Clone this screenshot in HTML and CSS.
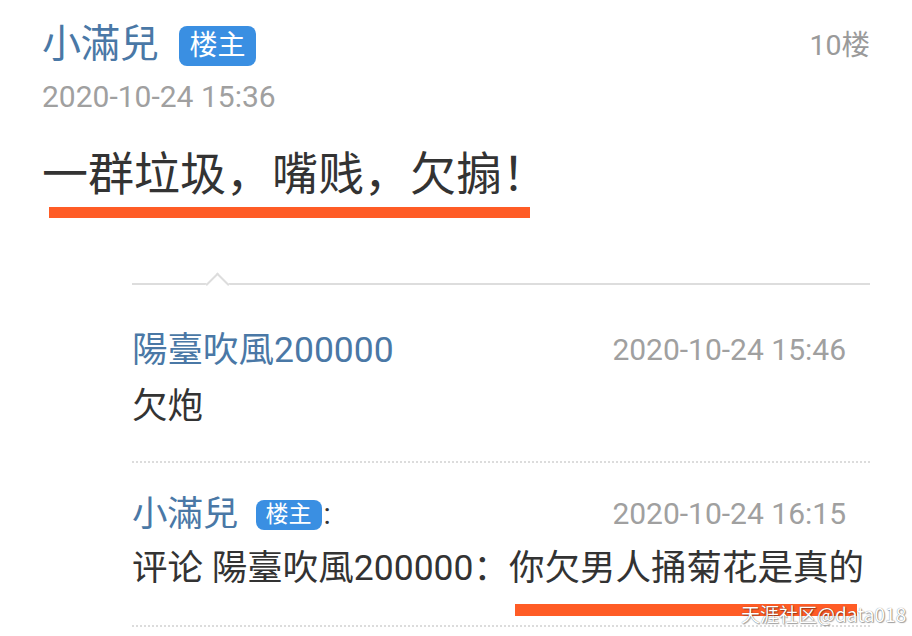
FILE: index.html
```html
<!DOCTYPE html>
<html lang="zh">
<head>
<meta charset="utf-8">
<link rel="stylesheet" href="styles.css">
</head>
<body>
<div class="post">
  <div class="post-head">
    <span class="author">小滿兒</span>
    <span class="badge">楼主</span>
    <span class="floor">10楼</span>
  </div>
  <div class="post-date">2020-10-24 15:36</div>
  <div class="post-body">一群垃圾，嘴贱，欠搧！</div>
  <div class="mark mark-main"></div>

  <div class="replies">
    <div class="divider"><span class="divider-arrow"></span></div>

    <div class="reply">
      <div class="reply-head">
        <span class="reply-author">陽臺吹風200000</span>
        <span class="reply-date">2020-10-24 15:46</span>
      </div>
      <div class="reply-text">欠炮</div>
    </div>

    <div class="dots"></div>

    <div class="reply reply-second">
      <div class="reply-head">
        <span class="reply-who"><span class="reply-author">小滿兒</span><span class="badge badge-small">楼主</span><span class="colon">:</span></span>
        <span class="reply-date">2020-10-24 16:15</span>
      </div>
      <div class="reply-text">评论 陽臺吹風200000：你欠男人捅菊花是真的</div>
      <div class="mark mark-reply"></div>
    </div>

    <div class="dots dots-last"></div>
  </div>
</div>
<div class="watermark">天涯社区@data018</div>
</body>
</html>
```

FILE: styles.css
```css
html, body {
  margin: 0;
  padding: 0;
  background: #ffffff;
}

body {
  width: 912px;
  height: 636px;
  overflow: hidden;
  position: relative;
  font-family: Roboto, "Noto Sans CJK SC", sans-serif;
  color: #333333;
}

.post {
  padding: 22px 42px 0 42px;
}

.post-head {
  display: flex;
  align-items: center;
  height: 44px;
}

.author {
  font-size: 39px;
  line-height: 44px;
  color: #4a78a6;
}

.badge {
  display: inline-flex;
  align-items: center;
  justify-content: center;
  margin-left: 20px;
  margin-top: 4px;
  width: 77px;
  height: 40px;
  border-radius: 8px;
  background: #3a8fe2;
  color: #ffffff;
  font-size: 28px;
  line-height: 40px;
}

.floor {
  margin-left: auto;
  font-size: 28.5px;
  line-height: 44px;
  color: #9a9a9a;
  margin-top: 4px;
}

.post-date {
  margin-top: 16px;
  font-size: 30px;
  line-height: 30px;
  color: #a0a0a0;
}

.post-body {
  margin-top: 32px;
  font-size: 46px;
  line-height: 60px;
  color: #333333;
}

.mark {
  background: #ff5c26;
}

.mark-main {
  margin-top: 3px;
  margin-left: 7px;
  width: 481px;
  height: 11px;
}

.replies {
  margin-left: 90px;
}

.divider {
  position: relative;
  margin-top: 65px;
  height: 0;
  border-top: 2px solid #dddddd;
}

.divider-arrow {
  position: absolute;
  left: 77px;
  top: -9px;
  width: 15px;
  height: 15px;
  background: #ffffff;
  border-top: 2px solid #dddddd;
  border-left: 2px solid #dddddd;
  transform: rotate(45deg);
}

.reply {
  margin-top: 43px;
}

.reply-second {
  margin-top: 29px;
}

.reply-head {
  display: flex;
  align-items: center;
  justify-content: space-between;
  height: 44px;
}

.reply-who {
  display: flex;
  align-items: center;
}

.reply-author {
  font-size: 35.5px;
  line-height: 44px;
  color: #4a78a6;
}

.badge-small {
  margin-left: 17px;
  margin-top: 2px;
  width: 66px;
  height: 30px;
  border-radius: 8px;
  font-size: 23px;
  line-height: 30px;
}

.colon {
  font-size: 30px;
  line-height: 44px;
  color: #333333;
  margin-left: 2px;
}

.reply-date {
  font-size: 30px;
  line-height: 44px;
  color: #a0a0a0;
  margin-right: 24px;
}

.reply-text {
  margin-top: 12px;
  font-size: 35.5px;
  line-height: 44px;
  color: #333333;
}

.reply-second .reply-text {
  margin-top: 10px;
}

.mark-reply {
  margin-top: 14px;
  margin-left: 383px;
  width: 342px;
  height: 12px;
}

.dots {
  margin-top: 33px;
  height: 0;
  border-top: 2px dotted #dcdcdc;
}

.dots-last {
  margin-top: 9px;
}

.watermark {
  position: absolute;
  left: 741px;
  top: 601px;
  font-family: "Noto Sans CJK SC", sans-serif;
  font-size: 19px;
  line-height: 26px;
  color: #ffffff;
  text-shadow: 0 0 1px rgba(0, 0, 0, 0.55), 1px 1px 1px rgba(0, 0, 0, 0.35);
  white-space: nowrap;
}
```
